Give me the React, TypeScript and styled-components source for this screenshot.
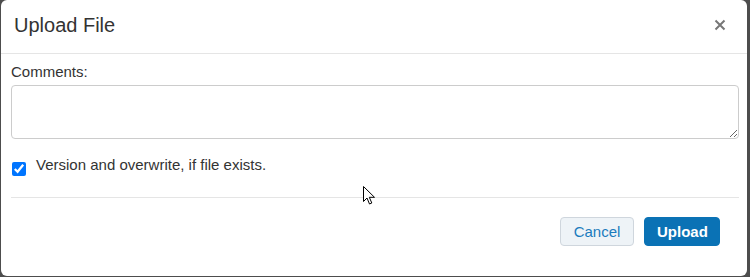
import styled, { createGlobalStyle } from 'styled-components';

const Global = createGlobalStyle`
  html, body {
    margin: 0;
    padding: 0;
    background: #4d4d4d;
    font-family: "Liberation Sans", Arial, sans-serif;
    color: #333;
  }
`;

const Modal = styled.div`
  position: relative;
  box-sizing: border-box;
  width: 746px;
  height: 276px;
  margin-left: 1px;
  background: #fff;
  border-radius: 6px;
  display: flex;
  flex-direction: column;
`;

const Header = styled.div`
  height: 53px;
  border-bottom: 1px solid #e5e5e5;
  display: flex;
  align-items: center;
  justify-content: space-between;
  padding: 0 21px 0 13px;
  flex-shrink: 0;
`;

const Title = styled.h4`
  margin: 0;
  font-size: 20px;
  font-weight: normal;
  color: #333;
  padding-bottom: 2px;
`;

const Close = styled.button`
  border: none;
  background: none;
  padding: 0;
  width: 12px;
  height: 12px;
  display: flex;
  cursor: pointer;
  margin-bottom: 4px;
`;

const Body = styled.div`
  padding: 8px 8px 0 10px;
`;

const Label = styled.div`
  font-size: 15px;
  line-height: 20px;
  color: #333;
  margin-bottom: 3px;
`;

const TextArea = styled.textarea`
  box-sizing: border-box;
  display: block;
  width: 728px;
  height: 54px;
  border: 1px solid #ccc;
  border-radius: 4px;
  resize: vertical;
  font-family: inherit;
  font-size: 14px;
`;

const CheckRow = styled.label`
  display: flex;
  align-items: flex-start;
  margin-top: 16px;
  font-size: 15px;
  line-height: 20px;
  color: #333;
`;

const Check = styled.input`
  width: 14px;
  height: 14px;
  margin: 7px 10px 0 1px;
`;

const Divider = styled.hr`
  width: 728px;
  margin: 21px 0 0 0;
  border: none;
  border-top: 1px solid #e5e5e5;
`;

const Footer = styled.div`
  display: flex;
  justify-content: flex-end;
  gap: 10px;
  padding: 19px 27px 0 0;
`;

const Button = styled.button<{ $primary?: boolean }>`
  box-sizing: border-box;
  height: 29px;
  padding: 0 12px;
  border-radius: 4px;
  font-family: inherit;
  font-size: 15px;
  cursor: pointer;
  border: 1px solid ${(p) => (p.$primary ? '#0a72b5' : '#cfd6dd')};
  background: ${(p) => (p.$primary ? '#0a72b5' : '#eef3f7')};
  color: ${(p) => (p.$primary ? '#fff' : '#1b7bbd')};
  font-weight: ${(p) => (p.$primary ? 'bold' : 'normal')};
  width: ${(p) => (p.$primary ? '76px' : '74px')};
`;

const Pointer = styled.svg`
  position: absolute;
  left: 362px;
  top: 186px;
  pointer-events: none;
`;

export default function App() {
  return (
    <>
      <Global />
      <Modal>
        <Header>
          <Title>Upload File</Title>
          <Close aria-label="Close">
            <svg width="12" height="12" viewBox="0 0 12 12">
              <path d="M1.5 1.5 L10.5 10.5 M10.5 1.5 L1.5 10.5" stroke="#777" strokeWidth="2" />
            </svg>
          </Close>
        </Header>
        <Body>
          <Label>Comments:</Label>
          <TextArea />
          <CheckRow>
            <Check type="checkbox" defaultChecked />
            Version and overwrite, if file exists.
          </CheckRow>
          <Divider />
        </Body>
        <Footer>
          <Button>Cancel</Button>
          <Button $primary>Upload</Button>
        </Footer>
        <Pointer width="13" height="20" viewBox="0 0 13 20">
          <path
            d="M0.5 0.5 L0.5 15.5 L4 12 L6.5 18 L8.8 17 L6.3 11.3 L11.5 11.3 Z"
            fill="#fff"
            stroke="#000"
            strokeWidth="1"
            strokeLinejoin="round"
          />
        </Pointer>
      </Modal>
    </>
  );
}
